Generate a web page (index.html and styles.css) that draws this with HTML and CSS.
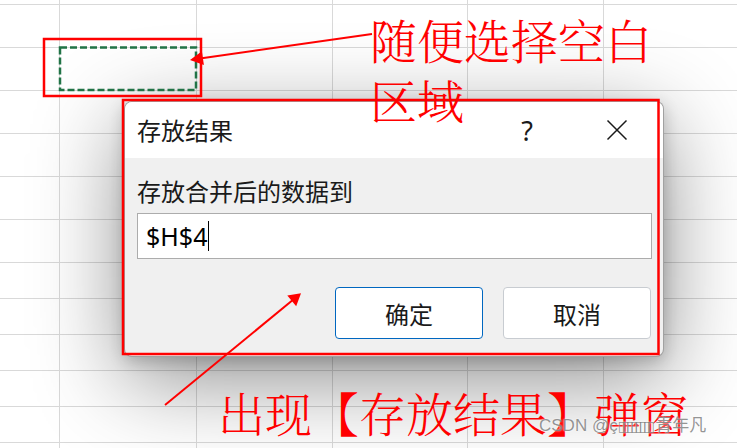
FILE: index.html
```html
<!DOCTYPE html>
<html lang="zh-CN">
<head>
<meta charset="utf-8">
<title>存放结果</title>
<link rel="stylesheet" href="styles.css">
</head>
<body>
<div class="sheet">
  <div class="rows rows-top"></div>
  <div class="rows rows-bottom"></div>
</div>

<div class="dialog">
  <div class="titlebar">
    <span class="title">存放结果</span>
    <span class="tb-btn help">?</span>
    <span class="tb-btn close">
      <svg width="22" height="22" viewBox="0 0 22 22"><path d="M1.5 1.5 L20.5 20.5 M20.5 1.5 L1.5 20.5" stroke="#1a1a1a" stroke-width="1.5" fill="none"/></svg>
    </span>
  </div>
  <div class="dbody">
    <div class="label">存放合并后的数据到</div>
    <div class="input"><span class="val">$H$4</span><span class="caret"></span></div>
    <div class="buttons">
      <button class="btn primary">确定</button>
      <button class="btn">取消</button>
    </div>
  </div>
</div>

<svg class="annot" width="737" height="448" viewBox="0 0 737 448">
  <rect x="60" y="47.5" width="136" height="42.5" fill="none" stroke="#217346" stroke-width="2.5" stroke-dasharray="7 3"/>
  <rect x="44" y="39" width="157" height="57" fill="none" stroke="#ff0000" stroke-width="2.5"/>
  <rect x="123" y="100" width="535.5" height="254" fill="none" stroke="#ff0000" stroke-width="2.5"/>
  <line x1="372" y1="34" x2="200" y2="58.5" stroke="#ff0000" stroke-width="2"/>
  <polygon points="190,60 203.9,65.1 201.9,51.2" fill="#ff0000"/>
  <line x1="165" y1="405" x2="294" y2="299" stroke="#ff0000" stroke-width="2"/>
  <polygon points="301,293.3 296.2,306.3 287.3,295.5" fill="#ff0000"/>
</svg>

<div class="note note-top">随便选择空白<br>区域</div>
<div class="note note-bottom">出现【存放结果】弹窗</div>
<div class="watermark">CSDN @ç<span class="tofu">▯▯▯▯▯▯▯▯</span>青年凡</div>
</body>
</html>
```

FILE: styles.css
```css
html, body {
  margin: 0;
  padding: 0;
}
body {
  width: 737px;
  height: 448px;
  overflow: hidden;
  position: relative;
  background: #ffffff;
  font-family: "Noto Sans CJK SC", "Noto Sans", sans-serif;
  color: #1a1a1a;
}

/* spreadsheet grid */
.sheet {
  display: flex;
  flex-direction: column;
}
.rows-top {
  height: 263px;
  background-image:
    linear-gradient(to right,
      transparent 59px, #d9d9d9 59px 60px,
      transparent 60px 196px, #d9d9d9 196px 197px,
      transparent 197px 332px, #d9d9d9 332px 333px,
      transparent 333px 467px, #d9d9d9 467px 468px,
      transparent 468px 603px, #d9d9d9 603px 604px,
      transparent 604px),
    repeating-linear-gradient(to bottom, transparent 0 4px, #d9d9d9 4px 5px, transparent 5px 43px);
}
.rows-bottom {
  height: 185px;
  background-image:
    linear-gradient(to right,
      transparent 59px, #d9d9d9 59px 60px,
      transparent 60px 196px, #d9d9d9 196px 197px,
      transparent 197px 332px, #d9d9d9 332px 333px,
      transparent 333px 467px, #d9d9d9 467px 468px,
      transparent 468px 603px, #d9d9d9 603px 604px,
      transparent 604px),
    repeating-linear-gradient(to bottom, transparent 0 35px, #d9d9d9 35px 36px);
}

/* dialog */
.dialog {
  position: absolute;
  left: 124px;
  top: 101px;
  width: 540px;
  height: 256px;
  box-sizing: border-box;
  border: 1px solid rgba(0, 0, 0, 0.33);
  border-radius: 8px;
  background: #f0f0f0;
  overflow: hidden;
  box-shadow: 0 22px 90px rgba(0, 0, 0, 0.45), 0 4px 16px rgba(0, 0, 0, 0.2);
}
.titlebar {
  height: 56px;
  background: #ffffff;
  display: flex;
  align-items: center;
  padding-left: 12px;
}
.title {
  flex: 1;
  font-size: 24px;
  line-height: 24px;
}
.tb-btn {
  width: 90px;
  height: 56px;
  display: flex;
  align-items: center;
  justify-content: center;
}
.help {
  font-family: "Noto Sans", sans-serif;
  font-size: 27px;
}
.close {
  margin-right: 1px;
}
.dbody {
  padding: 21px 11px 0 12px;
}
.label {
  font-size: 24px;
  line-height: 24px;
  height: 24px;
  margin-bottom: 10px;
}
.input {
  height: 46px;
  box-sizing: border-box;
  border: 1px solid #acacac;
  background: #ffffff;
  display: flex;
  align-items: center;
  padding-left: 8px;
}
.val {
  font-family: "Noto Sans", sans-serif;
  font-size: 25px;
  color: #000;
}
.caret {
  width: 1px;
  height: 30px;
  background: #000;
  margin-left: 1px;
}
.buttons {
  margin-top: 28px;
  display: flex;
  justify-content: flex-end;
  gap: 20px;
  padding-right: 1px;
}
.btn {
  width: 148px;
  height: 52px;
  box-sizing: border-box;
  border: 1px solid #c8ccd1;
  border-radius: 4px;
  background: #ffffff;
  font-family: "Noto Sans CJK SC", sans-serif;
  font-size: 24px;
  color: #1a1a1a;
  padding: 0;
}
.btn.primary {
  border-color: #0067c0;
}

/* annotations */
.annot {
  position: absolute;
  left: 0;
  top: 0;
}
.note {
  position: absolute;
  color: #ff0000;
  font-family: "Noto Serif CJK SC", "Noto Sans CJK SC", serif;
  font-weight: 300;
  font-size: 47px;
  line-height: 60px;
  white-space: nowrap;
}
.note-top {
  left: 370px;
  top: 9px;
}
.note-bottom {
  left: 218px;
  top: 382px;
}
.watermark {
  position: absolute;
  left: 539px;
  top: 416px;
  font-family: "Liberation Sans", "Noto Sans CJK SC", sans-serif;
  font-size: 17px;
  line-height: 20px;
  color: rgba(120, 120, 120, 0.8);
  text-shadow: 0 0 2px #fff;
  white-space: nowrap;
}
.tofu {
  font-family: "DejaVu Sans", sans-serif;
  font-size: 14px;
  letter-spacing: -3.5px;
  margin-right: 4px;
}
```
